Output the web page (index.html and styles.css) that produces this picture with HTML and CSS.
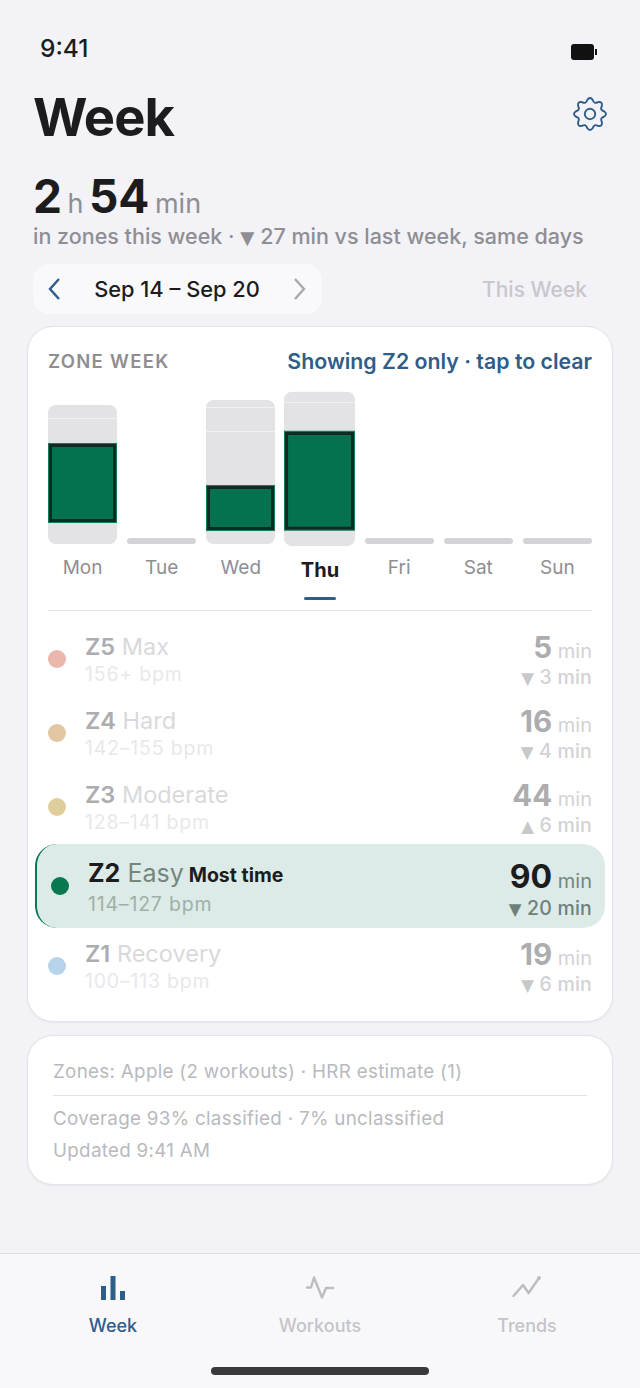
FILE: index.html
```html
<!DOCTYPE html>
<html lang="en">
  <head>
    <meta charset="UTF-8" />
    <meta name="viewport" content="width=device-width, initial-scale=1.0" />
    <title>Week</title>
    <link rel="stylesheet" href="styles.css">
  </head>
  <body>
    <div class="screen">
      <div class="status">
        <span class="time">9:41</span>
        <span class="battery"><span class="battery-body"></span><span class="battery-cap"></span></span>
      </div>

      <div class="head">
        <h1>Week</h1>
        <svg class="gear" viewBox="-20 -20 40 40" aria-label="Settings">
          <path d="M14.71 -2.93Q19 0 14.71 2.93Q10.16 4.21 12.47 8.33Q13.44 13.44 8.33 12.47Q4.21 10.16 2.93 14.71Q0 19 -2.93 14.71Q-4.21 10.16 -8.33 12.47Q-13.44 13.44 -12.47 8.33Q-10.16 4.21 -14.71 2.93Q-19 0 -14.71 -2.93Q-10.16 -4.21 -12.47 -8.33Q-13.44 -13.44 -8.33 -12.47Q-4.21 -10.16 -2.93 -14.71Q0 -19 2.93 -14.71Q4.21 -10.16 8.33 -12.47Q13.44 -13.44 12.47 -8.33Q10.16 -4.21 14.71 -2.93Z" />
          <circle r="5.5" />
        </svg>
      </div>

      <div class="total">
        <b>2</b><span class="unit">h</span><b>54</b><span class="unit">min</span>
      </div>
      <p class="total-note">in zones this week · <span class="tri">▼</span> 27 min vs last week, same days</p>

      <div class="week-nav">
        <div class="pill">
          <svg class="chev" viewBox="0 0 14 24"><path class="chev-on" d="M12 2 3 12l9 10" /></svg>
          <span class="range">Sep 14 – Sep 20</span>
          <svg class="chev" viewBox="0 0 14 24"><path class="chev-off" d="m2 2 9 10-9 10" /></svg>
        </div>
        <span class="this-week">This Week</span>
      </div>

      <!-- Zone chart and list -->
      <section class="card zones">
        <div class="card-head">
          <span class="card-title">ZONE WEEK</span>
          <span class="filter">Showing Z2 only · tap to clear</span>
        </div>

        <div class="chart">
          <div class="col">
            <div class="bar">
              <div class="seg" style="height: 13px"></div>
              <div class="seg" style="height: 24px"></div>
              <div class="seg seg-sel" style="height: 80px"></div>
              <div class="seg" style="height: 21px"></div>
            </div>
          </div>
          <div class="col"><div class="bar-empty"></div></div>
          <div class="col">
            <div class="bar">
              <div class="seg" style="height: 7px"></div>
              <div class="seg" style="height: 23px"></div>
              <div class="seg" style="height: 53px"></div>
              <div class="seg seg-sel" style="height: 46px"></div>
              <div class="seg" style="height: 13px"></div>
            </div>
          </div>
          <div class="col">
            <div class="bar bar-today">
              <div class="seg" style="height: 10px"></div>
              <div class="seg" style="height: 27px"></div>
              <div class="seg seg-sel" style="height: 97px"></div>
              <div class="seg" style="height: 15px"></div>
            </div>
          </div>
          <div class="col"><div class="bar-empty"></div></div>
          <div class="col"><div class="bar-empty"></div></div>
          <div class="col"><div class="bar-empty"></div></div>
        </div>

        <div class="days">
          <span>Mon</span>
          <span>Tue</span>
          <span>Wed</span>
          <span class="today">Thu</span>
          <span>Fri</span>
          <span>Sat</span>
          <span>Sun</span>
        </div>

        <div class="rows">
          <div class="row">
            <span class="dot dot-z5"></span>
            <div class="info">
              <div class="zone"><b>Z5</b> Max</div>
              <div class="bpm">156+ bpm</div>
            </div>
            <div class="nums">
              <div class="mins"><b>5</b> min</div>
              <div class="delta"><span class="tri">▼</span> 3 min</div>
            </div>
          </div>
          <div class="row">
            <span class="dot dot-z4"></span>
            <div class="info">
              <div class="zone"><b>Z4</b> Hard</div>
              <div class="bpm">142–155 bpm</div>
            </div>
            <div class="nums">
              <div class="mins"><b>16</b> min</div>
              <div class="delta"><span class="tri">▼</span> 4 min</div>
            </div>
          </div>
          <div class="row">
            <span class="dot dot-z3"></span>
            <div class="info">
              <div class="zone"><b>Z3</b> Moderate</div>
              <div class="bpm">128–141 bpm</div>
            </div>
            <div class="nums">
              <div class="mins"><b>44</b> min</div>
              <div class="delta"><span class="tri">▲</span> 6 min</div>
            </div>
          </div>
          <div class="row row-sel">
            <span class="dot dot-z2"></span>
            <div class="info">
              <div class="zone"><b>Z2</b> Easy <strong>Most time</strong></div>
              <div class="bpm">114–127 bpm</div>
            </div>
            <div class="nums">
              <div class="mins"><b>90</b> min</div>
              <div class="delta"><span class="tri">▼</span> 20 min</div>
            </div>
          </div>
          <div class="row">
            <span class="dot dot-z1"></span>
            <div class="info">
              <div class="zone"><b>Z1</b> Recovery</div>
              <div class="bpm">100–113 bpm</div>
            </div>
            <div class="nums">
              <div class="mins"><b>19</b> min</div>
              <div class="delta"><span class="tri">▼</span> 6 min</div>
            </div>
          </div>
        </div>
      </section>

      <section class="card meta">
        <p class="meta-top">Zones: Apple (2 workouts) · HRR estimate (1)</p>
        <p>Coverage 93% classified · 7% unclassified</p>
        <p>Updated 9:41 AM</p>
      </section>

      <!-- Tab bar -->
      <nav class="tabs">
        <div class="tab tab-on">
          <svg viewBox="0 0 34 26">
            <rect x="5" y="11" width="5" height="14" />
            <rect x="14.5" y="1" width="5" height="24" />
            <rect x="24" y="16" width="5" height="9" />
          </svg>
          <span>Week</span>
        </div>
        <div class="tab tab-mid">
          <svg viewBox="0 0 34 26"><path class="line" d="M4 12.5h4l3-10 8 20 4-9.5h7" /></svg>
          <span>Workouts</span>
        </div>
        <div class="tab">
          <svg viewBox="0 0 34 26"><path class="line" d="M3.5 21 13 10l5.6 8L29 3" /><circle class="line-end" cx="29" cy="3" r="2" /></svg>
          <span>Trends</span>
        </div>
        <div class="home-bar"></div>
      </nav>
    </div>
  </body>
</html>
```

FILE: styles.css
```css
* {
  box-sizing: border-box;
  margin: 0;
  padding: 0;
}

body {
  font-family: "Inter", "Liberation Sans", sans-serif;
  background-color: #f2f2f7;
  color: #1c1c1e;
}

.screen {
  width: 640px;
  height: 1388px;
  display: flex;
  flex-direction: column;
  overflow: hidden;
}

/* Status bar */
.status {
  height: 32px;
  margin: 32px 43px 0 40px;
  display: flex;
  justify-content: space-between;
  align-items: center;
}

.time {
  font-size: 24.5px;
  font-weight: 500;
}

.battery {
  display: flex;
  align-items: center;
  gap: 1px;
  margin-top: 8px;
}

.battery-body {
  width: 23px;
  height: 16px;
  border-radius: 3px;
  background-color: #111;
}

.battery-cap {
  width: 2px;
  height: 6px;
  background-color: #111;
}

/* Header */
.head {
  display: flex;
  justify-content: space-between;
  align-items: center;
  margin: 20px 31px 0 33px;
  height: 66px;
}

h1 {
  font-size: 52.5px;
  font-weight: 700;
  letter-spacing: -1px;
}

.gear {
  width: 38px;
  height: 38px;
  margin-top: -6px;
  fill: none;
  stroke: #2f5d8a;
  stroke-width: 2;
}

.total {
  margin: 20px 0 0 33px;
  height: 52px;
  display: flex;
  align-items: baseline;
  gap: 5.5px;
  font-size: 46px;
  line-height: 52px;
}

.total b {
  font-weight: 700;
}

.unit {
  font-size: 27px;
  color: #8e8e93;
}

.total-note {
  margin: 1px 0 0 33px;
  font-size: 21.5px;
  line-height: 26px;
  font-weight: 500;
  color: #8e8e93;
}

.tri {
  font-family: "DejaVu Sans", sans-serif;
  font-size: 0.85em;
}

.week-nav {
  display: flex;
  justify-content: space-between;
  align-items: center;
  margin: 13px 53px 0 33px;
}

.pill {
  width: 289px;
  height: 50px;
  padding: 0 15px 0 14px;
  display: flex;
  justify-content: space-between;
  align-items: center;
  background-color: #f9f9fb;
  border-radius: 16px;
}

.chev {
  width: 14px;
  height: 24px;
  fill: none;
  stroke-width: 2.4;
}

.chev-on {
  stroke: #2f5d8a;
}

.chev-off {
  stroke: #a8a8ad;
}

.range {
  font-size: 21.8px;
  font-weight: 500;
}

.this-week {
  font-size: 21px;
  font-weight: 500;
  color: #c7c7cc;
}

/* Cards */
.card {
  margin: 0 27px;
  background-color: #fff;
  border: 1px solid #e2e2e8;
  border-radius: 26px;
  box-shadow: 0 1px 3px rgba(0, 0, 0, 0.05);
}

.zones {
  margin-top: 12px;
  height: 696px;
  padding: 20px 20px 0;
}

.card-head {
  display: flex;
  justify-content: space-between;
  align-items: center;
  height: 28px;
}

.card-title {
  font-size: 18.5px;
  font-weight: 600;
  letter-spacing: 1.3px;
  color: #8e8e93;
}

.filter {
  font-size: 21.3px;
  font-weight: 600;
  color: #2f5d8a;
}

.chart {
  height: 152px;
  margin-top: 17px;
  display: flex;
  gap: 10px;
}

.col {
  flex: 1;
  display: flex;
  flex-direction: column;
  justify-content: flex-end;
}

.bar {
  display: flex;
  flex-direction: column;
  gap: 1px;
  border-radius: 8px;
  overflow: hidden;
  background-color: #f1f1f3;
}

.bar-today {
  transform: scale(1.03);
}

.bar-empty {
  height: 6px;
  border-radius: 3px;
  background-color: #d4d4d7;
}

.seg {
  background-color: #e3e3e6;
  flex: none;
}

.seg-sel {
  margin: -1px 0;
  background-color: #04724f;
  border: 1.5px solid #0e8059;
  box-shadow: inset 0 0 0 3px #122a24;
}

.days {
  display: flex;
  gap: 10px;
  height: 67px;
  border-bottom: 1px solid #e2e2e6;
  padding-top: 12px;
}

.days span {
  flex: 1;
  height: 24px;
  text-align: center;
  font-size: 19px;
  color: #8e8e93;
}

.days .today {
  position: relative;
  top: 2px;
  font-size: 20px;
  font-weight: 700;
  color: #1c1c1e;
}

/* the little marker under the selected day */
.today::after {
  content: "";
  position: absolute;
  left: 19px;
  right: 19px;
  top: 39px;
  height: 3px;
  border-radius: 2px;
  background-color: #2f5d8a;
}

.rows {
  margin-top: 11px;
}

.row {
  height: 74px;
  display: flex;
  align-items: center;
}

.dot {
  width: 18px;
  height: 18px;
  border-radius: 50%;
  flex: none;
  margin-right: 19px;
}

.dot-z5 {
  background-color: #e9b7ab;
}

.dot-z4 {
  background-color: #e3c6a2;
}

.dot-z3 {
  background-color: #dfce9c;
}

.dot-z2 {
  background-color: #07784f;
}

.dot-z1 {
  background-color: #b6d3ea;
}

.info {
  flex: 1;
}

.zone {
  font-size: 23.5px;
  line-height: 28px;
  color: #d9d9db;
  white-space: nowrap;
}

.zone b {
  font-weight: 600;
  color: #adadb0;
}

.bpm {
  margin-top: 1px;
  font-size: 19.5px;
  line-height: 24px;
  letter-spacing: 0.8px;
  color: #e8e8ea;
}

.nums {
  padding-top: 6px;
  text-align: right;
  white-space: nowrap;
}

.mins {
  font-size: 20px;
  line-height: 28px;
  color: #d2d2d5;
}

.mins b {
  font-size: 29.5px;
  font-weight: 700;
  color: #adadb0;
}

.delta {
  font-size: 19.5px;
  line-height: 24px;
  font-weight: 500;
  letter-spacing: 0.2px;
  color: #d2d2d5;
}

.delta .tri {
  color: #c8c8cb;
}

.row-sel {
  height: 84px;
  margin: 0 -13px 1px;
  padding: 0 13px 0 14px;
  background-color: #dcebe7;
  border-left: 2px solid #07784f;
  border-radius: 22px;
}

.row-sel .info {
  margin-top: 2px;
}

.row-sel .zone {
  font-size: 25px;
  color: #75867f;
}

.row-sel .zone b {
  font-weight: 700;
  color: #1c1c1e;
}

.row-sel .zone strong {
  margin-left: -2px;
  font-size: 19.5px;
  font-weight: 700;
  color: #1c1c1e;
}

.row-sel .bpm {
  margin-top: 3px;
  color: #9fb0aa;
}

.row-sel .nums {
  padding-top: 12px;
}

.row-sel .mins {
  line-height: 30px;
  color: #75867f;
}

.row-sel .mins b {
  font-size: 32px;
  color: #1c1c1e;
}

.row-sel .delta,
.row-sel .delta .tri {
  color: #6f807a;
}

.meta {
  margin-top: 13px;
  height: 150px;
  padding: 22px 25px 0;
  font-size: 18.8px;
  line-height: 28px;
  letter-spacing: 0.3px;
  color: #b9b9bd;
}

.meta p {
  white-space: nowrap;
}

.meta-top {
  border-bottom: 1px solid #e2e2e6;
  padding-bottom: 9px;
  margin-bottom: 9px;
}

.meta p + p + p {
  margin-top: 4px;
}

/* Tab bar */
.tabs {
  position: relative;
  margin-top: auto;
  height: 135px;
  display: flex;
  background-color: #f8f8fb;
  border-top: 1px solid #dedee3;
}

.tab {
  flex: 1;
  display: flex;
  flex-direction: column;
  align-items: center;
  padding-top: 21px;
  gap: 14px;
  font-size: 18px;
  font-weight: 500;
  color: #c4c4c9;
}

.tab svg {
  width: 34px;
  height: 26px;
}

.tab-on {
  color: #2f5d8a;
  fill: #2f5d8a;
}

.tab-mid {
  flex: none;
  width: 188px;
}

.line {
  fill: none;
  stroke: #bcbcc1;
  stroke-width: 2.4;
  stroke-linejoin: round;
  stroke-linecap: round;
}

.line-end {
  fill: #bcbcc1;
}

.home-bar {
  position: absolute;
  left: 211px;
  bottom: 13px;
  width: 218px;
  height: 8px;
  border-radius: 4px;
  background-color: #3a3a3c;
}
```
